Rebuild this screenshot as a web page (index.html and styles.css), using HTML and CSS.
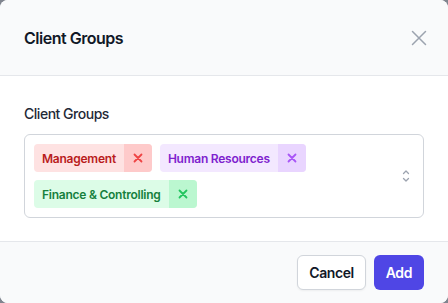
FILE: index.html
```html
<!DOCTYPE html>
<html lang="en">
<head>
    <meta charset="UTF-8">
    <meta name="viewport" content="width=device-width, initial-scale=1.0">
    <title>Client Groups</title>
    <link rel="stylesheet" href="styles.css">
</head>
<body>
    <div class="modal">
        <!-- Header -->
        <div class="modal-header">
            <h2>Client Groups</h2>
            <span class="close">
                <svg width="16" height="16" viewBox="0 0 16 16" fill="none" stroke="currentColor" stroke-width="1.5" stroke-linecap="round">
                    <path d="M1.5 1.5l13 13M14.5 1.5l-13 13"/>
                </svg>
            </span>
        </div>

        <!-- Body -->
        <div class="modal-body">
            <label class="label">Client Groups</label>
            <div class="select">
                <div class="tags">
                    <span class="tag red">
                        <span class="tag-text">Management</span>
                        <span class="tag-remove">
                            <svg width="10" height="10" viewBox="0 0 10 10" fill="none" stroke="currentColor" stroke-width="1.8" stroke-linecap="round"><path d="M1.5 1.5l7 7M8.5 1.5l-7 7"/></svg>
                        </span>
                    </span>
                    <span class="tag purple">
                        <span class="tag-text">Human Resources</span>
                        <span class="tag-remove">
                            <svg width="10" height="10" viewBox="0 0 10 10" fill="none" stroke="currentColor" stroke-width="1.8" stroke-linecap="round"><path d="M1.5 1.5l7 7M8.5 1.5l-7 7"/></svg>
                        </span>
                    </span>
                    <span class="tag green">
                        <span class="tag-text">Finance &amp; Controlling</span>
                        <span class="tag-remove">
                            <svg width="10" height="10" viewBox="0 0 10 10" fill="none" stroke="currentColor" stroke-width="1.8" stroke-linecap="round"><path d="M1.5 1.5l7 7M8.5 1.5l-7 7"/></svg>
                        </span>
                    </span>
                </div>
                <span class="chevrons">
                    <svg width="12" height="18" viewBox="0 0 12 18" fill="none" stroke="currentColor" stroke-width="1.3" stroke-linecap="round" stroke-linejoin="round">
                        <path d="M3.5 6.5L6 4l2.5 2.5M3.5 11.5L6 14l2.5-2.5"/>
                    </svg>
                </span>
            </div>
        </div>

        <!-- Footer -->
        <div class="modal-footer">
            <button class="btn btn-cancel">Cancel</button>
            <button class="btn btn-add">Add</button>
        </div>
    </div>
</body>
</html>
```

FILE: styles.css
```css
body {
    margin: 0;
    padding: 0;
    background: #80858f;
    font-family: 'Inter', 'Noto Sans', sans-serif;
    letter-spacing: -0.03em;
    color: #111827;
}

.modal {
    width: 448px;
    height: 303px;
    background: #ffffff;
    border-radius: 8px;
    overflow: hidden;
    display: flex;
    flex-direction: column;
}

.modal-header {
    background: #f9fafb;
    border-bottom: 1px solid #e5e7eb;
    height: 77px;
    box-sizing: border-box;
    padding: 0 24px;
    display: flex;
    justify-content: space-between;
    align-items: center;
}

.modal-header h2 {
    margin: 0;
    font-size: 16px;
    font-weight: 600;
    line-height: 24px;
    color: #111827;
}

.close {
    color: #9ca3af;
    display: flex;
    margin-right: -3px;
}

.modal-body {
    padding: 28px 24px 23px;
    flex: 1;
}

.label {
    display: block;
    font-size: 14px;
    font-weight: 500;
    line-height: 20px;
    color: #1f2937;
    margin-bottom: 10px;
}

.select {
    border: 1px solid #d1d5db;
    border-radius: 6px;
    padding: 9px 9px;
    display: flex;
    align-items: center;
    justify-content: space-between;
}

.tags {
    display: flex;
    flex-wrap: wrap;
    gap: 8px;
    width: 300px;
}

.tag {
    display: inline-flex;
    height: 28px;
    border-radius: 4px;
    overflow: hidden;
    font-size: 12px;
    font-weight: 600;
    letter-spacing: -0.02em;
}

.tag-text {
    padding: 0 8px;
    display: flex;
    align-items: center;
}

.tag-remove {
    width: 28px;
    display: flex;
    align-items: center;
    justify-content: center;
}

.tag.red { background: #fee2e2; color: #b91c1c; }
.tag.red .tag-remove { background: #fecaca; color: #ef4444; }

.tag.purple { background: #f3e8ff; color: #7e22ce; }
.tag.purple .tag-remove { background: #e9d5ff; color: #a855f7; }

.tag.green { background: #dcfce7; color: #15803d; }
.tag.green .tag-remove { background: #bbf7d0; color: #22c55e; }

.chevrons {
    color: #9ca3af;
    display: flex;
    margin-right: 2px;
}

.modal-footer {
    background: #f9fafb;
    border-top: 1px solid #e5e7eb;
    height: 62px;
    box-sizing: border-box;
    padding: 0 24px;
    display: flex;
    justify-content: flex-end;
    align-items: center;
    gap: 8px;
}

.btn {
    font-family: 'Inter', 'Noto Sans', sans-serif;
    font-size: 14px;
    font-weight: 600;
    letter-spacing: -0.03em;
    height: 35px;
    padding: 0 11px;
    border-radius: 6px;
    cursor: pointer;
}

.btn-cancel {
    background: #ffffff;
    color: #111827;
    border: 1px solid #d1d5db;
    box-shadow: 0 1px 2px rgba(0, 0, 0, 0.05);
}

.btn-add {
    background: #4f46e5;
    color: #ffffff;
    border: none;
    padding: 0 12px;
}
```
